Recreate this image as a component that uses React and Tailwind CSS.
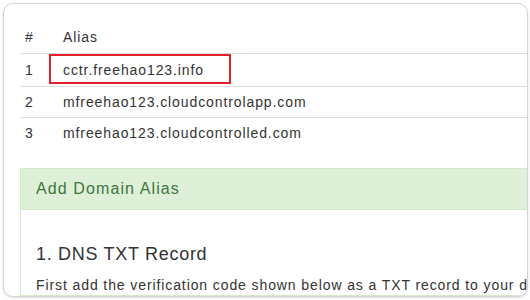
// App.jsx - domain alias list with add-alias panel
const ALIASES = [
    { id: 1, name: "cctr.freehao123.info", marked: true, h: "h-[33px]" },
    { id: 2, name: "mfreehao123.cloudcontrolapp.com", h: "h-[31px]" },
    { id: 3, name: "mfreehao123.cloudcontrolled.com", h: "h-[31px]", last: true },
];

function AliasRow({ alias }) {
    return (
        <div className={`flex items-center ${alias.h} ${alias.last ? "" : "border-b border-[#dddddd]"}`}>
            <div className="w-[43px] pl-[5px]">{alias.id}</div>
            <div className="relative flex-1">
                {alias.name}
                {alias.marked && (
                    <div className="absolute left-[-14px] top-[-6px] h-[30px] w-[182px] border-2 border-[#e3212b]" />
                )}
            </div>
        </div>
    );
}

export default function App() {
    return (
        <div className="h-[300px] w-[530px] bg-white p-[3px]">
            <div
                className="h-[294px] w-[525px] overflow-hidden rounded-[10px] border border-[#d3d3dd] bg-white pl-[16px] pt-[18px] text-[14px] tracking-[0.9px] text-[#333333] shadow-sm"
                style={{ fontFamily: '"Liberation Sans", Arial, sans-serif' }}
            >
                <div className="w-[760px]">
                    {/* Alias table */}
                    <div className="flex h-[32px] items-center border-b border-[#dddddd]">
                        <div className="w-[43px] pl-[5px]">#</div>
                        <div>Alias</div>
                    </div>
                    {ALIASES.map((a) => (
                        <AliasRow key={a.id} alias={a} />
                    ))}

                    {/* Add domain alias panel */}
                    <div className="mt-[19px] border border-[#d6e9c6]">
                        <div className="flex h-[41px] items-center border-b border-[#d6e9c6] bg-[#dff0d8] pl-[15px] text-[16px] tracking-[1.1px] text-[#3c763d]">
                            Add Domain Alias
                        </div>
                        <div className="pl-[15px] pt-[31px]">
                            <div className="flex h-[26px] items-center text-[18px] tracking-[0.7px]">
                                1. DNS TXT Record
                            </div>
                            <div className="mt-[8px] flex h-[20px] items-center whitespace-nowrap">
                                First add the verification code shown below as a TXT record to your domain
                            </div>
                        </div>
                    </div>
                </div>
            </div>
        </div>
    );
}
